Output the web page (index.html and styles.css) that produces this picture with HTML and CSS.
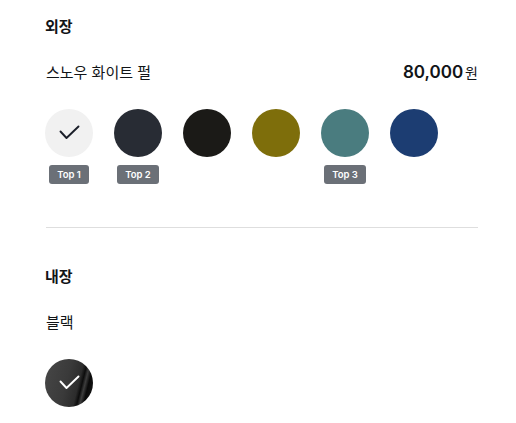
FILE: index.html
```html
<!DOCTYPE html>
<html lang="ko">
  <head>
    <meta charset="utf-8">
    <title>색상 선택</title>
    <link rel="stylesheet" href="styles.css">
  </head>
  <body>
    <div class="panel">
      <section class="color-section exterior">
        <h3 class="section-title">외장</h3>
        <div class="option-row">
          <span class="option-name">스노우 화이트 펄</span>
          <span class="option-price"><b>80,000</b>원</span>
        </div>
        <div class="swatches">
          <div class="swatch">
            <span class="chip chip-white selected">
              <svg viewBox="0 0 48 48" width="48" height="48"><path d="M15.5 22.5l6 6.5L33.5 17.5" fill="none" stroke="#1b1f2a" stroke-width="1.9" stroke-linecap="round" stroke-linejoin="round"/></svg>
            </span>
            <span class="badge">Top 1</span>
          </div>
          <div class="swatch">
            <span class="chip chip-gray"></span>
            <span class="badge">Top 2</span>
          </div>
          <div class="swatch">
            <span class="chip chip-black"></span>
          </div>
          <div class="swatch">
            <span class="chip chip-olive"></span>
          </div>
          <div class="swatch">
            <span class="chip chip-teal"></span>
            <span class="badge">Top 3</span>
          </div>
          <div class="swatch">
            <span class="chip chip-navy"></span>
          </div>
        </div>
      </section>
      <section class="color-section interior">
        <h3 class="section-title">내장</h3>
        <div class="option-row">
          <span class="option-name">블랙</span>
        </div>
        <div class="swatches">
          <div class="swatch">
            <span class="chip chip-leather selected">
              <svg viewBox="0 0 48 48" width="48" height="48"><path d="M15.5 22.5l6 6.5L33.5 17.5" fill="none" stroke="#ffffff" stroke-width="1.9" stroke-linecap="round" stroke-linejoin="round"/></svg>
            </span>
          </div>
        </div>
      </section>
    </div>
  </body>
</html>
```

FILE: styles.css
```css
body {
  margin: 0;
  background: #ffffff;
  font-family: "Noto Sans CJK KR", "Noto Sans", sans-serif;
  color: #111417;
}
.panel {
  padding: 14px 38px 0 45px;
}
.color-section {
  padding-bottom: 43px;
}
.exterior {
  border-bottom: 1px solid #dedede;
  margin-left: 1px;
}
.exterior .section-title,
.exterior .option-row,
.exterior .swatches {
  margin-left: -1px;
}
.interior {
  padding-top: 36px;
  padding-bottom: 14px;
}
.section-title {
  margin: 0;
  font-size: 15px;
  font-weight: 700;
  line-height: 24px;
}
.option-row {
  display: flex;
  justify-content: space-between;
  align-items: center;
  margin-top: 22px;
  height: 24px;
  font-size: 15px;
  line-height: 24px;
}
.option-name {
  padding-left: 1px;
}
.option-price {
  font-size: 14px;
}
.option-price b {
  font-family: Inter, "Noto Sans", sans-serif;
  font-size: 17px;
  font-weight: 600;
  margin-right: 2px;
}
.swatches {
  display: flex;
  gap: 21px;
  margin-top: 25px;
}
.swatch {
  display: flex;
  flex-direction: column;
  align-items: center;
  width: 48px;
}
.chip {
  display: block;
  width: 48px;
  height: 48px;
  border-radius: 50%;
}
.chip svg {
  display: block;
}
.chip-white { background: #f1f1f1; }
.chip-gray { background: #282c34; }
.chip-black { background: #1b1a17; }
.chip-olive { background: #7e6e0b; }
.chip-teal { background: #4a7c7f; }
.chip-navy { background: #1c3d72; }
.chip-leather {
  background: linear-gradient(104deg, #474747 0%, #3a3a3a 45%, #2c2c2c 66%, #0c0c0c 72%, #3d3d3d 77%, #0a0a0a 83%, #1c1c1c 100%);
}
.badge {
  margin-top: 8px;
  height: 19px;
  padding: 0 8px;
  border-radius: 3px;
  background: #6b7077;
  color: #ffffff;
  font-family: Inter, "Noto Sans", sans-serif;
  font-size: 9.5px;
  font-weight: 600;
  line-height: 19px;
  white-space: nowrap;
}
```
